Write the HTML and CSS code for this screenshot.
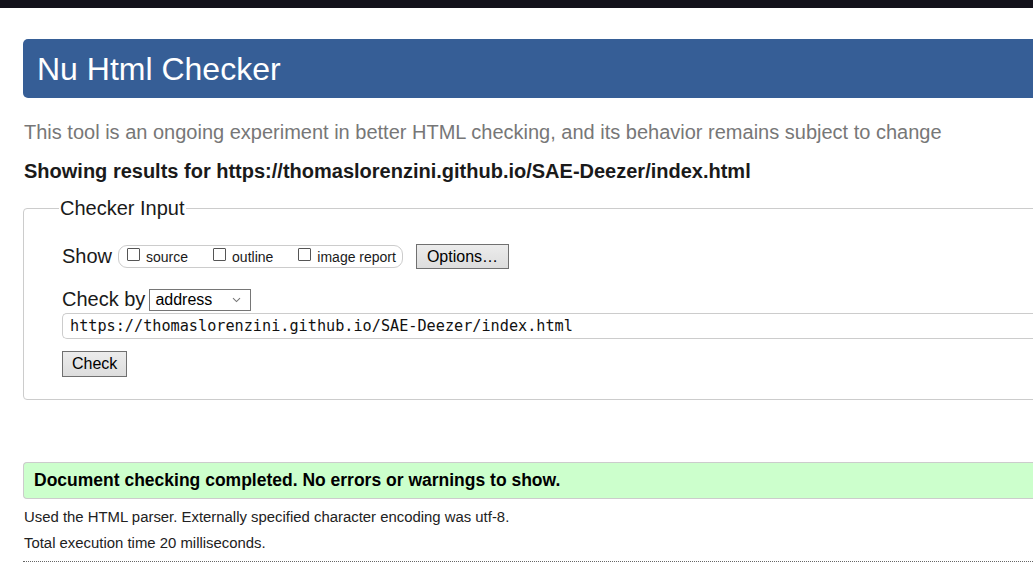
FILE: index.html
```html
<!DOCTYPE html>
<html lang="en">
<head>
<meta charset="utf-8">
<title>Nu Html Checker</title>
<link rel="stylesheet" href="styles.css">
</head>
<body>
<div class="topbar"></div>
<main class="page">
  <h1 class="banner">Nu Html Checker</h1>
  <p class="tagline">This tool is an ongoing experiment in better HTML checking, and its behavior remains subject to change</p>
  <p class="showing">Showing results for https://thomaslorenzini.github.io/SAE-Deezer/index.html</p>
  <fieldset class="input-box">
    <legend class="legend">Checker Input</legend>
    <div class="row show-row">
      <span class="label">Show</span>
      <span class="opts">
        <label class="opt"><span class="cb"></span>source</label>
        <label class="opt"><span class="cb"></span>outline</label>
        <label class="opt"><span class="cb"></span>image report</label>
      </span>
      <button class="btn">Options…</button>
    </div>
    <div class="row by-row">
      <span class="label">Check by</span>
      <span class="select">address
        <svg class="chev" width="9" height="6" viewBox="0 0 9 6"><path d="M1 1.2 L4.5 4.6 L8 1.2" fill="none" stroke="#777" stroke-width="1.1"/></svg>
      </span>
    </div>
    <div class="url">https://thomaslorenzini.github.io/SAE-Deezer/index.html</div>
    <button class="btn check">Check</button>
  </fieldset>
  <div class="success">Document checking completed. No errors or warnings to show.</div>
  <p class="details">Used the HTML parser. Externally specified character encoding was utf-8.</p>
  <p class="details">Total execution time 20 milliseconds.</p>
  <hr class="rule">
</main>
</body>
</html>
```

FILE: styles.css
```css
html, body {
  margin: 0;
  padding: 0;
  overflow: hidden;
  background: #ffffff;
}
body {
  font-family: "Liberation Sans", Arial, sans-serif;
  color: #1a1a1a;
  width: 1033px;
  height: 585px;
}
.topbar {
  height: 8px;
  background: #13121b;
}
.page {
  padding-left: 23px;
  width: 1200px;
}
.banner {
  margin: 31px 0 0 0;
  height: 59px;
  box-sizing: border-box;
  background: #365e96;
  color: #ffffff;
  border-radius: 5px 0 0 5px;
  font-weight: normal;
  font-size: 32px;
  line-height: 60px;
  padding-left: 14px;
}
.tagline {
  margin: 23px 0 0 1px;
  font-size: 20px;
  line-height: 23px;
  color: #777777;
}
.showing {
  margin: 16px 0 0 1px;
  font-size: 20px;
  line-height: 23px;
  font-weight: bold;
  color: #1a1a1a;
}
.input-box {
  margin: 14px 0 0 0;
  border: 1px solid #cccccc;
  border-radius: 4px 0 0 4px;
  padding: 24px 0 22px 38px;
  min-width: 0;
}
.legend {
  font-size: 20px;
  line-height: 23px;
  padding: 0 1px;
  margin-left: -3px;
  color: #1a1a1a;
}
.row {
  display: flex;
  align-items: center;
}
.label {
  font-size: 20px;
  line-height: 23px;
  color: #1a1a1a;
}
.opts {
  display: flex;
  align-items: center;
  margin-left: 6px;
  height: 23px;
  box-sizing: border-box;
  border: 1px solid #cccccc;
  border-radius: 9px;
  padding: 0 6px 0 8px;
}
.opt {
  display: flex;
  align-items: center;
  font-size: 14px;
  color: #1a1a1a;
  margin-right: 25px;
}
.opt:last-child {
  margin-right: 0;
}
.cb {
  width: 13px;
  height: 13px;
  box-sizing: border-box;
  border: 1px solid #555555;
  border-radius: 1px;
  margin-right: 6px;
  position: relative;
  top: -2px;
}
.btn {
  font-family: "Liberation Sans", Arial, sans-serif;
  font-size: 16px;
  color: #000000;
  background: linear-gradient(#ececec, #dddddd);
  border: 1px solid #707070;
  border-radius: 0;
  padding: 0 10px;
  height: 25px;
  line-height: 22px;
}
.show-row .btn {
  margin-left: 13px;
}
.show-row {
  height: 25px;
}
.by-row {
  margin-top: 19px;
}
.select {
  margin-left: 4px;
  width: 102px;
  height: 22px;
  box-sizing: border-box;
  border: 1px solid #767676;
  font-size: 16px;
  line-height: 20px;
  padding-left: 5px;
  display: flex;
  align-items: center;
  justify-content: space-between;
  padding-right: 9px;
  color: #000000;
}
.chev {
  display: block;
}
.url {
  margin-top: 2px;
  height: 26px;
  box-sizing: border-box;
  border: 1px solid #cccccc;
  border-right: none;
  border-radius: 5px 0 0 5px;
  font-family: "DejaVu Sans Mono", "Liberation Mono", monospace;
  font-size: 15.2px;
  line-height: 24px;
  padding-left: 7px;
  color: #111111;
}
.check {
  margin-top: 12px;
  height: 26px;
  padding: 0 9px;
}
.success {
  margin-top: 62px;
  height: 37px;
  box-sizing: border-box;
  background: #ccffcc;
  border: 1px solid #cccccc;
  border-right: none;
  border-radius: 4px 0 0 4px;
  font-size: 17.5px;
  font-weight: bold;
  line-height: 34px;
  padding-left: 10px;
  color: #000000;
}
.details {
  margin: 10px 0 0 1px;
  font-size: 14.9px;
  line-height: 17px;
  color: #222222;
}
.details + .details {
  margin-top: 9px;
}
.rule {
  margin: 9px 0 0 0;
  border: none;
  border-top: 1px dotted #666666;
  height: 0;
}
```
